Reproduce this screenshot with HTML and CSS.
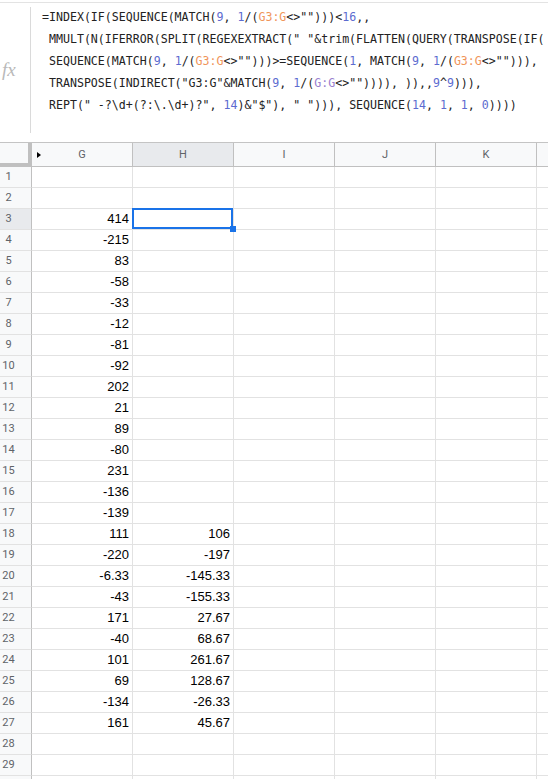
FILE: index.html
```html
<!DOCTYPE html>
<html lang="en">
<head>
    <meta charset="UTF-8">
    <meta name="viewport" content="width=device-width, initial-scale=1.0">
    <title>Sheet</title>
    <link rel="stylesheet" href="styles.css">
</head>
<body>
    <div class="formula-bar">
        <div class="fx">fx</div>
<pre class="formula">=INDEX(IF(SEQUENCE(MATCH(<span class="num">9</span>, <span class="num">1</span>/(<span class="ref">G3:G</span>&lt;&gt;"")))&lt;<span class="num">16</span>,,
 MMULT(N(IFERROR(SPLIT(REGEXEXTRACT(" "&amp;trim(FLATTEN(QUERY(TRANSPOSE(IF(
 SEQUENCE(MATCH(<span class="num">9</span>, <span class="num">1</span>/(<span class="ref">G3:G</span>&lt;&gt;"")))&gt;=SEQUENCE(<span class="num">1</span>, MATCH(<span class="num">9</span>, <span class="num">1</span>/(<span class="ref">G3:G</span>&lt;&gt;""))),
 TRANSPOSE(INDIRECT("G3:G"&amp;MATCH(<span class="num">9</span>, <span class="num">1</span>/(<span class="ref-alt">G:G</span>&lt;&gt;"")))), )),,<span class="num">9</span>^<span class="num">9</span>))),
 REPT(" -?\d+(?:\.\d+)?", <span class="num">14</span>)&amp;"$"), " "))), SEQUENCE(<span class="num">14</span>, <span class="num">1</span>, <span class="num">1</span>, <span class="num">0</span>))))</pre>
    </div>

    <div class="sheet" id="sheet">
        <div class="corner"></div>
        <div class="col-head"><span class="hidden-cols"></span>G</div>
        <div class="col-head active">H</div>
        <div class="col-head">I</div>
        <div class="col-head">J</div>
        <div class="col-head">K</div>
        <div class="col-head"></div>
    </div>

    <script>
        const sheet = document.getElementById('sheet');

        // values for columns G and H, keyed by row number
        const colG = {
            3: '414', 4: '-215', 5: '83', 6: '-58', 7: '-33', 8: '-12', 9: '-81',
            10: '-92', 11: '202', 12: '21', 13: '89', 14: '-80', 15: '231',
            16: '-136', 17: '-139', 18: '111', 19: '-220', 20: '-6.33', 21: '-43',
            22: '171', 23: '-40', 24: '101', 25: '69', 26: '-134', 27: '161'
        };
        const colH = {
            18: '106', 19: '-197', 20: '-145.33', 21: '-155.33', 22: '27.67',
            23: '68.67', 24: '261.67', 25: '128.67', 26: '-26.33', 27: '45.67'
        };

        // 29 numbered rows, plus the top sliver of the next one
        for (let r = 1; r <= 30; r++) {
            const label = document.createElement('div');
            label.className = 'row-head' + (r === 3 ? ' active' : '');
            if (r < 30) label.textContent = r;
            sheet.appendChild(label);

            for (let c = 0; c < 6; c++) {
                const cell = document.createElement('div');
                cell.className = 'cell';
                if (c === 0 && colG[r]) cell.textContent = colG[r];
                if (c === 1 && colH[r]) cell.textContent = colH[r];
                if (c === 1 && r === 3) cell.classList.add('selected');
                sheet.appendChild(cell);
            }
        }
    </script>
</body>
</html>
```

FILE: styles.css
```css
body {
    margin: 0;
    background: #fff;
    overflow: hidden;
    font-family: "Liberation Sans", Arial, sans-serif;
}

.formula-bar {
    display: flex;
    margin-top: 2px;
    height: 139px;
    border-top: 1px solid #e3e3e3;
    border-bottom: 1px solid #c4c4c4;
}

.fx {
    flex: 0 0 28px;
    margin-top: 4px;
    height: 126px;
    padding-left: 2px;
    border-right: 1px solid #dadada;
    display: flex;
    align-items: center;
    font-family: "Liberation Serif", serif;
    font-style: italic;
    font-size: 19px;
    color: #b9b9b9;
}

.formula {
    margin: 0;
    padding: 3px 0 0 11px;
    font-family: "DejaVu Sans Mono", monospace;
    font-size: 11.6px;
    line-height: 22px;
    color: #222;
    white-space: pre;
    overflow: hidden;
}

.num {
    color: #5c6bd0;
}

.ref {
    color: #f0955a;
}

.ref-alt {
    color: #9a7fcf;
}

.sheet {
    display: grid;
    grid-template-columns: 32px repeat(6, 101px);
    grid-template-rows: 24px;
    grid-auto-rows: 21px;
    width: 548px;
    overflow: hidden;
}

.sheet > div {
    box-sizing: border-box;
}

.corner {
    background: #f8f9fa;
    border-right: 4px solid #c0c0c0;
    border-bottom: 4px solid #c0c0c0;
}

.col-head {
    position: relative;
    background: #f8f9fa;
    border-right: 1px solid #c0c0c0;
    border-bottom: 1px solid #c0c0c0;
    text-align: center;
    font-family: Roboto, Arial, sans-serif;
    font-size: 11px;
    line-height: 23px;
    color: #5f6368;
}

.col-head.active {
    background: #e8eaed;
}

.hidden-cols {
    position: absolute;
    left: 5px;
    top: 9px;
    border-left: 4px solid #000;
    border-top: 3px solid transparent;
    border-bottom: 3px solid transparent;
}

.row-head {
    background: #f8f9fa;
    border-right: 1px solid #c0c0c0;
    border-bottom: 1px solid #e2e2e2;
    padding-right: 14px;
    text-align: center;
    font-family: Roboto, Arial, sans-serif;
    font-size: 11px;
    line-height: 20px;
    color: #5f6368;
}

.row-head.active {
    background: #e8eaed;
}

.cell {
    border-right: 1px solid #e2e2e2;
    border-bottom: 1px solid #e2e2e2;
    padding-right: 3px;
    text-align: right;
    font-size: 13px;
    line-height: 20px;
    color: #000;
}

.cell.selected {
    position: relative;
}

.cell.selected::after {
    content: "";
    position: absolute;
    left: -1px;
    top: -1px;
    right: 0;
    bottom: 0;
    border: 2px solid #1a73e8;
}

.cell.selected::before {
    content: "";
    position: absolute;
    right: -3px;
    bottom: -3px;
    width: 6px;
    height: 6px;
    background: #1a73e8;
    z-index: 1;
}
```
